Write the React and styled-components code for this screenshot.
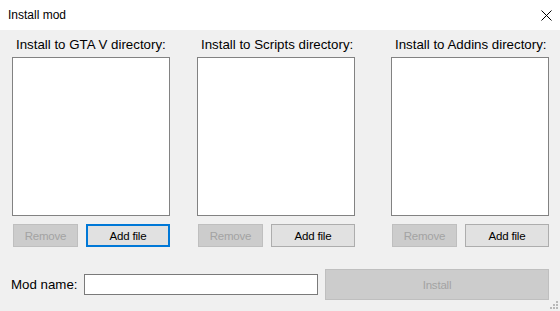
import React from 'react';
import styled, { createGlobalStyle } from 'styled-components';

const GlobalStyle = createGlobalStyle`
  html, body {
    margin: 0;
    padding: 0;
    background: #f0f0f0;
  }
`;

const Window = styled.div`
  width: 560px;
  height: 311px;
  background: #f0f0f0;
  font-family: "Liberation Sans", Arial, sans-serif;
  color: #000;
  position: relative;
  overflow: hidden;
`;

const TitleBar = styled.div`
  height: 30px;
  background: #fff;
  display: flex;
  align-items: center;
  justify-content: space-between;
  padding-left: 8px;
  box-sizing: border-box;
`;

const Title = styled.span`
  font-size: 12px;
  margin-top: -1px;
`;

const CloseBtn = styled.div`
  width: 28px;
  height: 30px;
  display: flex;
  align-items: center;
  justify-content: center;
`;

const Columns = styled.div`
  display: flex;
  padding-left: 12px;
`;

const Column = styled.div`
  width: 158px;
  display: flex;
  flex-direction: column;
  margin-left: ${p => p.$ml || 0}px;
`;

const Label = styled.div`
  font-size: 13.3px;
  height: 27px;
  line-height: 15px;
  padding: 7px 0 0 4px;
  box-sizing: border-box;
  white-space: nowrap;
`;

const ListBox = styled.div`
  height: 159px;
  background: #fff;
  border: 1px solid #828282;
  box-sizing: border-box;
`;

const ButtonRow = styled.div`
  display: flex;
  gap: 8px;
  margin-top: 8px;
  padding-left: 1px;
`;

const Button = styled.div`
  width: ${p => p.$w}px;
  height: ${p => p.$h || 23}px;
  box-sizing: border-box;
  display: flex;
  align-items: center;
  justify-content: center;
  font-size: 11.5px;
  letter-spacing: -0.2px;
  background: ${p => (p.$disabled ? '#cccccc' : '#e1e1e1')};
  border: ${p => (p.$focused ? '2px solid #0078d7' : p.$disabled ? '1px solid #bfbfbf' : '1px solid #adadad')};
  color: ${p => (p.$disabled ? '#a3a3a3' : '#000')};
`;

const BottomRow = styled.div`
  display: flex;
  align-items: center;
  margin-top: 22px;
  padding-left: 11px;
`;

const ModLabel = styled.span`
  font-size: 13.3px;
  width: 73px;
  white-space: nowrap;
`;

const TextBox = styled.div`
  width: 234px;
  height: 21px;
  background: #fff;
  border: 1px solid #7a7a7a;
  box-sizing: border-box;
  margin-right: 7px;
`;

const Grip = styled.svg`
  position: absolute;
  right: 2px;
  bottom: 2px;
`;

const columns = [
  { label: 'Install to GTA V directory:', ml: 0, focused: true },
  { label: 'Install to Scripts directory:', ml: 27, focused: false },
  { label: 'Install to Addins directory:', ml: 36, focused: false },
];

export default function App() {
  return (
    <>
      <GlobalStyle />
      <Window>
        <TitleBar>
          <Title>Install mod</Title>
          <CloseBtn>
            <svg width="11" height="11" viewBox="0 0 11 11">
              <path d="M0.5 0.5 L10.5 10.5 M10.5 0.5 L0.5 10.5" stroke="#000" strokeWidth="1" fill="none" />
            </svg>
          </CloseBtn>
        </TitleBar>
        <Columns>
          {columns.map(c => (
            <Column key={c.label} $ml={c.ml}>
              <Label>{c.label}</Label>
              <ListBox />
              <ButtonRow>
                <Button $w={65} $disabled>Remove</Button>
                <Button $w={84} $focused={c.focused}>Add file</Button>
              </ButtonRow>
            </Column>
          ))}
        </Columns>
        <BottomRow>
          <ModLabel>Mod name:</ModLabel>
          <TextBox />
          <Button $w={224} $h={31} $disabled>Install</Button>
        </BottomRow>
        <Grip width="10" height="10" viewBox="0 0 10 10">
          {[[8, 2], [8, 5], [5, 5], [8, 8], [5, 8], [2, 8]].map(([x, y]) => (
            <rect key={`${x}-${y}`} x={x} y={y} width="2" height="2" fill="#b8b8b8" />
          ))}
        </Grip>
      </Window>
    </>
  );
}
